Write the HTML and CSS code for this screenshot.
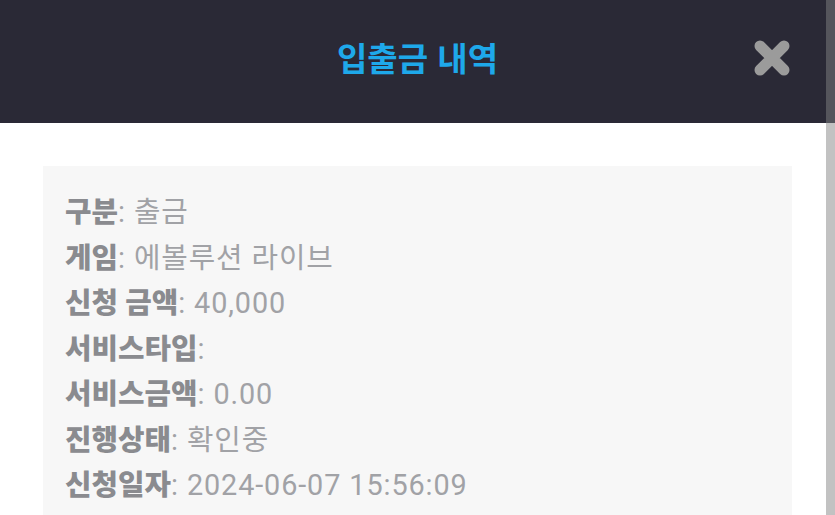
FILE: index.html
```html
<!DOCTYPE html>
<html lang="ko">
<head>
<meta charset="utf-8">
<link rel="stylesheet" href="styles.css">
</head>
<body>
<div class="page">
  <div class="main">
    <header class="header">
      <span></span>
      <h1 class="title">입출금 내역</h1>
      <button class="close" aria-label="닫기">
        <svg width="36" height="36" viewBox="0 0 36 36"><path d="M6 6 L30 30 M30 6 L6 30" stroke="#9b9b9b" stroke-width="11" stroke-linecap="round"/></svg>
      </button>
    </header>
    <section class="card">
      <div class="row"><b>구분</b>: 출금</div>
      <div class="row"><b>게임</b>: 에볼루션 라이브</div>
      <div class="row"><b>신청 금액</b>: 40,000</div>
      <div class="row"><b>서비스타입</b>:</div>
      <div class="row"><b>서비스금액</b>: 0.00</div>
      <div class="row"><b>진행상태</b>: 확인중</div>
      <div class="row"><b>신청일자</b>: 2024-06-07 15:56:09</div>
    </section>
  </div>
  <div class="scrollbar">
    <div class="scroll-top"></div>
    <div class="scroll-rest"></div>
  </div>
</div>
</body>
</html>
```
FILE: styles.css
```css
html, body {
  margin: 0;
  padding: 0;
  height: 100%;
  overflow: hidden;
  background: #ffffff;
  font-family: "Roboto", "Noto Sans CJK KR", sans-serif;
}
.page {
  display: flex;
  height: 515px;
}
.main {
  flex: 1;
  display: flex;
  flex-direction: column;
  min-width: 0;
}
.header {
  flex: 0 0 123px;
  height: 123px;
  background: #2a2936;
  display: grid;
  grid-template-columns: 1fr auto 1fr;
  align-items: center;
  padding-left: 9px;
}
.title {
  margin: 0;
  color: #1ea8ea;
  font-family: "Noto Sans CJK KR", sans-serif;
  font-weight: 700;
  font-size: 33px;
  line-height: 1;
  padding-bottom: 8px;
}
.close {
  justify-self: end;
  margin-right: 36px;
  margin-bottom: 8px;
  background: none;
  border: 0;
  padding: 0;
  width: 36px;
  height: 36px;
  display: flex;
}
.card {
  margin: 43px 34px 0 43px;
  background: #f7f7f7;
  padding: 24px 22px 22px;
  flex: 1;
}
.row {
  font-size: 28.8px;
  line-height: 45.5px;
  color: #a1a2a6;
  white-space: nowrap;
  letter-spacing: 0.9px;
}
.row b {
  color: #8a8b8f;
  font-weight: 800;
  letter-spacing: 0;
}
.scrollbar {
  width: 9px;
  display: flex;
  flex-direction: column;
}
.scroll-top {
  height: 123px;
  background: #55555c;
}
.scroll-rest {
  flex: 1;
  background: #c2c2c2;
}
```
